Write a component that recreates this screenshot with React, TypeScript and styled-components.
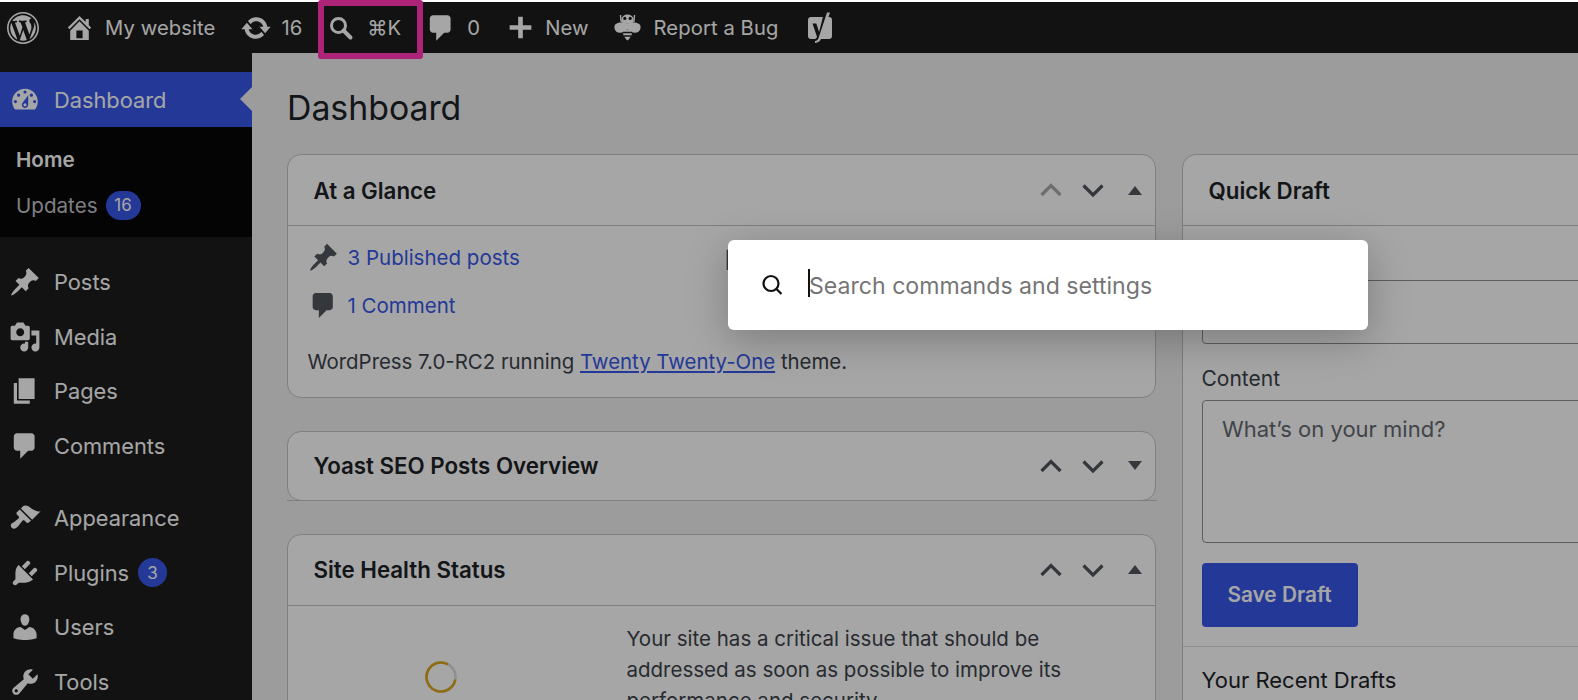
import styled, { createGlobalStyle } from 'styled-components';

const GlobalStyle = createGlobalStyle`
  html, body {
    margin: 0;
    padding: 0;
    height: 700px;
    overflow: hidden;
    background: #fff;
    font-family: Inter, "Liberation Sans", sans-serif;
  }
  * {
    box-sizing: border-box;
  }
`;

const paths = {
  wordpress:
    'M20 10c0-5.52-4.48-10-10-10S0 4.48 0 10s4.48 10 10 10 10-4.48 10-10zM10 1.01c4.97 0 8.99 4.02 8.99 8.99s-4.02 8.99-8.99 8.99S1.01 14.97 1.01 10 5.03 1.01 10 1.01zM8.01 14.82L4.96 6.61c.49-.03 1.05-.08 1.05-.08.43-.05.38-1.01-.06-.99 0 0-1.29.1-2.13.1-.15 0-.33 0-.52-.01 1.44-2.17 3.9-3.6 6.7-3.6 2.09 0 3.99.79 5.41 2.09-.6-.08-1.45.35-1.45 1.42 0 .66.38 1.22.79 1.88.31.54.5 1.22.5 2.21 0 1.34-1.27 4.48-1.27 4.48l-2.71-7.5c.48-.03.75-.16.75-.16.43-.05.38-1.1-.05-1.08 0 0-1.3.11-2.14.11-.78 0-2.11-.11-2.11-.11-.43-.02-.48 1.06-.05 1.08l.84.08 1.12 3.04zm6.02 2.15L16.64 10s.67-1.69.39-3.81c.63 1.14.94 2.42.94 3.81 0 2.96-1.56 5.58-3.94 6.97zM2.68 6.77L6.5 17.25c-2.67-1.3-4.47-4.07-4.47-7.25 0-1.16.2-2.23.65-3.23zm7.45 4.53l2.29 6.25c-.75.27-1.57.42-2.42.42-.72 0-1.41-.11-2.06-.3z',
  home: 'M16 8.5l1.53 1.53-1.06 1.06L10 4.62l-6.47 6.47-1.06-1.06L10 2.5l4 4v-2h2v4zm-6-2.46l6 5.99V18H4v-5.97zM12 17v-5H8v5h4z',
  update:
    'M10.2 3.28c3.53 0 6.43 2.61 6.92 6h2.08l-3.5 4-3.5-4h2.32c-.45-1.97-2.21-3.45-4.32-3.45-1.45 0-2.73.71-3.54 1.78L4.95 5.66C6.23 4.2 8.11 3.28 10.2 3.28zm-.4 13.44c-3.52 0-6.43-2.61-6.92-6H.8l3.5-4c1.17 1.33 2.33 2.67 3.5 4H5.48c.45 1.97 2.21 3.45 4.32 3.45 1.45 0 2.73-.71 3.54-1.78l1.71 1.95c-1.28 1.46-3.15 2.38-5.25 2.38z',
  comment:
    'M5 2h9c1.1 0 2 .9 2 2v7c0 1.1-.9 2-2 2h-2l-5 5v-5H5c-1.1 0-2-.9-2-2V4c0-1.1.9-2 2-2z',
  plus: 'M17 8.5v3h-5.5V17h-3v-5.5H3v-3h5.5V3h3v5.5z',
  dashboard:
    'M3.76 16h12.48c1.1-1.37 1.76-3.11 1.76-5 0-4.42-3.58-8-8-8s-8 3.58-8 8c0 1.89.66 3.63 1.76 5zM10 4c.55 0 1 .45 1 1s-.45 1-1 1-1-.45-1-1 .45-1 1-1zM6 6c.55 0 1 .45 1 1s-.45 1-1 1-1-.45-1-1 .45-1 1-1zm8 0c.55 0 1 .45 1 1s-.45 1-1 1-1-.45-1-1 .45-1 1-1zm-5.37 5.55L12 7v6c0 1.1-.9 2-2 2s-2-.9-2-2c0-.57.24-1.08.63-1.45zM4 10c.55 0 1 .45 1 1s-.45 1-1 1-1-.45-1-1 .45-1 1-1zm12 0c.55 0 1 .45 1 1s-.45 1-1 1-1-.45-1-1 .45-1 1-1zm-5 3c0-.55-.45-1-1-1s-1 .45-1 1 .45 1 1 1 1-.45 1-1z',
  pin: 'M10.44 3.02l1.82-1.82 6.36 6.35-1.83 1.82c-1.05-.68-2.48-.57-3.41.36l-.75.75c-.92.93-1.04 2.35-.35 3.41l-1.83 1.82-2.41-2.41-2.8 2.79c-.42.42-3.38 2.71-3.8 2.29s1.86-3.39 2.28-3.81l2.79-2.79L4.1 9.36l1.83-1.82c1.05.69 2.48.57 3.4-.36l.75-.75c.93-.92 1.05-2.35.36-3.41z',
  media:
    'M13 11V4c0-.55-.45-1-1-1h-1.67L9 1H5L3.67 3H2c-.55 0-1 .45-1 1v7c0 .55.45 1 1 1h10c.55 0 1-.45 1-1zM7 4.5c1.38 0 2.5 1.12 2.5 2.5S8.38 9.5 7 9.5 4.5 8.38 4.5 7 5.62 4.5 7 4.5zM14 6h5v10.5c0 1.38-1.12 2.5-2.5 2.5S14 17.88 14 16.5s1.12-2.5 2.5-2.5c.17 0 .34.02.5.05V9h-3V6zm-4 8.05V13h2v3.5c0 1.38-1.12 2.5-2.5 2.5S7 17.88 7 16.5 8.12 14 9.5 14c.17 0 .34.02.5.05z',
  page: 'M6 15V2h10v13H6zm-1 1h8v2H3V5h2v11z',
  appearance:
    'M14.48 11.06L7.41 3.99l1.5-1.5c.5-.56 2.3-.47 3.51.32 1.21.8 1.43 1.28 2.91 2.1 1.18.64 2.45 1.26 4.45.85zm-.71.71L6.7 4.7 4.93 6.47c-.39.39-.39 1.02 0 1.41l1.06 1.06c.39.39.39 1.03 0 1.42-.6.6-1.43 1.11-2.21 1.69-.35.26-.7.53-1.01.84C1.43 13.23.4 14.76 1.7 16.06c1.3 1.3 2.83.27 4.17-1.07.31-.31.58-.66.84-1.01.58-.78 1.09-1.61 1.69-2.21.39-.39 1.03-.39 1.42 0l1.06 1.06c.39.39 1.02.39 1.41 0z',
  plugins:
    'M13.11 4.36L9.87 7.6 8 5.73l3.24-3.24c.35-.34 1.05-.2 1.56.32.52.51.66 1.21.31 1.55zm-8 1.77l.91-1.12 9.01 9.01-1.19.84c-.71.71-2.63 1.16-3.82 1.16H6.14L4.9 17.26c-.59.59-1.54.59-2.12 0-.59-.58-.59-1.53 0-2.12l1.24-1.24v-3.88c0-1.13.4-3.19 1.09-3.89zm7.26 3.97l3.24-3.24c.34-.35 1.04-.21 1.55.31.52.51.66 1.21.31 1.55l-3.24 3.25z',
  users:
    'M10 9.25c-2.27 0-2.73-3.44-2.73-3.44C7 4.02 7.82 2 9.97 2c2.16 0 2.98 2.02 2.71 3.81 0 0-.41 3.44-2.68 3.44zm0 2.57L12.72 10c2.39 0 4.52 2.33 4.52 4.53v2.49s-3.65 1.13-7.24 1.13c-3.65 0-7.24-1.13-7.24-1.13v-2.49c0-2.25 1.94-4.48 4.47-4.48z',
  tools:
    'M16.68 9.77c-1.34 1.34-3.3 1.67-4.95.99l-5.41 6.52c-.99.99-2.59.99-3.58 0s-.99-2.59 0-3.57l6.52-5.42c-.68-1.65-.35-3.61.99-4.95 1.28-1.28 3.12-1.62 4.72-1.06l-2.89 2.89 2.82 2.82 2.86-2.87c.53 1.58.18 3.39-1.08 4.65zM3.81 16.21c.4.39 1.04.39 1.43 0 .4-.4.4-1.04 0-1.43-.39-.4-1.03-.4-1.43 0-.39.39-.39 1.03 0 1.43z',
};

function Dash({ name, size }: { name: keyof typeof paths; size: number }) {
  return (
    <svg width={size} height={size} viewBox="0 0 20 20" fill="currentColor" style={{ flex: 'none' }}>
      <path d={paths[name]} />
    </svg>
  );
}

function SearchGlyph() {
  return (
    <svg width="26" height="26" viewBox="0 0 26 26" fill="none" stroke="currentColor" style={{ flex: 'none' }}>
      <circle cx="10.5" cy="10.5" r="7" strokeWidth="3" />
      <path d="M15.5 15.5l7 7" strokeWidth="4" strokeLinecap="round" />
    </svg>
  );
}

function BeeGlyph() {
  return (
    <svg width="27" height="27" viewBox="0 0 27 27" fill="currentColor" style={{ flex: 'none' }}>
      <path d="M6.5 1 7 7 10 9M20.5 1 20 7l-3 2" stroke="currentColor" strokeWidth="1.4" fill="none" />
      <ellipse cx="13.5" cy="5.2" rx="6" ry="4.6" />
      <circle cx="10.8" cy="4.4" r="1.6" fill="#1c1c1c" />
      <circle cx="16.2" cy="4.4" r="1.6" fill="#1c1c1c" />
      <path d="M13.5 9.5C9.5 8 3.5 7.8 1.2 10.6-.8 13.6 1.2 18.5 5.5 18.8c3 .2 5.8-1.3 8-3.8 2.2 2.5 5 4 8 3.8 4.3-.3 6.3-5.2 4.3-8.2-2.3-2.8-8.3-2.6-12.3-1.100z" />
      <path d="M8.5 15.5c0 4.5 2.2 9 5 11 2.8-2 5-6.5 5-11z" />
      <path d="M8.8 17.8h9.4v1.5H8.8zM9.900 21.300h7.200v1.500H9.900z" fill="#1c1c1c" />
    </svg>
  );
}

function YoastGlyph() {
  return (
    <svg width="28" height="32" viewBox="0 0 28 32" style={{ flex: 'none' }}>
      <path
        d="M5 5h18c1.8 0 3 1.200 3 3v16c0 2-1.200 3-3 3H5c-2 0-3-1.200-3-3V8c0-1.800 1.200-3 3-3z"
        fill="currentColor"
      />
      <path
        d="M21.500 1.500 13 26c-.8 2.200-2.500 3.600-5 4.200V27.500c1.600-.5 2.600-1.300 3-2.800L6.500 11.500h3.800l2.800 8.600L17.800 1.500z"
        fill="#1c1c1c"
      />
      <path d="M21 .5h3L15 27c-.8 2.200-3 3.800-6 4v-2c2-.3 3-1.300 3.500-2.800z" fill="currentColor" />
    </svg>
  );
}

function Chevron({ dir, faded }: { dir: 'up' | 'down'; faded?: boolean }) {
  return (
    <svg
      width="26"
      height="26"
      viewBox="0 0 26 26"
      fill="none"
      stroke={faded ? '#a7aaad' : '#50575e'}
      strokeWidth="3.2"
      style={{ flex: 'none' }}
    >
      <path d={dir === 'up' ? 'M3.5 18 13 8.500 22.500 18' : 'M3.500 8.500 13 18l9.500-9.500'} />
    </svg>
  );
}

function HealthRing() {
  return (
    <svg width="32" height="32" viewBox="0 0 32 32" fill="none" strokeWidth="2.6" style={{ flex: 'none' }}>
      <circle cx="16" cy="16" r="14.5" stroke="#dcdcde" />
      <path d="M23 3.300A14.500 14.500 0 1 0 30.300 18.500" stroke="#dba617" />
    </svg>
  );
}

const barItems = [
  { icon: <Dash name="home" size={31} />, label: 'My website', gap: 10, left: 25 },
  { icon: <Dash name="update" size={32} />, label: '16', gap: 9, left: 25 },
  { icon: <SearchGlyph />, label: '⌘K', gap: 13, left: 26 },
  { icon: <Dash name="comment" size={32} />, label: '0', gap: 10, left: 24 },
  { icon: <Dash name="plus" size={31} />, label: 'New', gap: 9, left: 25 },
  { icon: <BeeGlyph />, label: 'Report a Bug', gap: 13, left: 25 },
];

const menuGroups = [
  [
    { icon: 'pin', label: 'Posts' },
    { icon: 'media', label: 'Media' },
    { icon: 'page', label: 'Pages' },
    { icon: 'comment', label: 'Comments' },
  ],
  [
    { icon: 'appearance', label: 'Appearance' },
    { icon: 'plugins', label: 'Plugins', badge: '3' },
    { icon: 'users', label: 'Users' },
    { icon: 'tools', label: 'Tools' },
  ],
] as { icon: keyof typeof paths; label: string; badge?: string }[][];

function App() {
  return (
    <Page>
      <GlobalStyle />
      <AdminBar>
        <Dash name="wordpress" size={32} />
        {barItems.map((item) => (
          <BarItem key={item.label} $gap={item.gap} $left={item.left}>
            {item.icon}
            {item.label}
          </BarItem>
        ))}
        <BarItem $gap={0} $left={28}>
          <YoastGlyph />
        </BarItem>
      </AdminBar>

      <Body>
        <Sidebar>
          <CurrentItem>
            <Dash name="dashboard" size={32} />
            Dashboard
          </CurrentItem>
          <SubMenu>
            <SubItem $active>Home</SubItem>
            <SubItem>
              Updates <Count $wide>16</Count>
            </SubItem>
          </SubMenu>
          {menuGroups.map((group, i) => (
            <MenuGroup key={i}>
              {group.map((item) => (
                <MenuItem key={item.label}>
                  <Dash name={item.icon} size={32} />
                  {item.label}
                  {item.badge && <Count>{item.badge}</Count>}
                </MenuItem>
              ))}
            </MenuGroup>
          ))}
        </Sidebar>

        <Main>
          <Title>Dashboard</Title>
          <Columns>
            <LeftColumn>
              <Card>
                <CardHead>
                  At a Glance
                  <CardControls>
                    <Chevron dir="up" faded />
                    <Chevron dir="down" />
                    <Caret />
                  </CardControls>
                </CardHead>
                <GlanceBody>
                  <GlanceGrid>
                    <GlanceRow>
                      <Dash name="pin" size={31} />
                      <BlueLink>3 Published posts</BlueLink>
                    </GlanceRow>
                    <GlanceRow>
                      <Dash name="page" size={31} />
                      <BlueLink>1 Page</BlueLink>
                    </GlanceRow>
                    <GlanceRow>
                      <Dash name="comment" size={31} />
                      <BlueLink>1 Comment</BlueLink>
                    </GlanceRow>
                  </GlanceGrid>
                  <Running>
                    WordPress 7.0-RC2 running <ThemeLink>Twenty Twenty-One</ThemeLink> theme.
                  </Running>
                </GlanceBody>
              </Card>

              <Card $flatBottom>
                <CardHead $closed>
                  Yoast SEO Posts Overview
                  <CardControls>
                    <Chevron dir="up" />
                    <Chevron dir="down" />
                    <Caret $down />
                  </CardControls>
                </CardHead>
              </Card>

              <Card>
                <CardHead>
                  Site Health Status
                  <CardControls>
                    <Chevron dir="up" />
                    <Chevron dir="down" />
                    <Caret />
                  </CardControls>
                </CardHead>
                <HealthBody>
                  <RingSlot>
                    <HealthRing />
                  </RingSlot>
                  <HealthText>
                    Your site has a critical issue that should be addressed as soon as possible to
                    improve its performance and security.
                  </HealthText>
                </HealthBody>
              </Card>
            </LeftColumn>

            <RightColumn>
              <Card>
                <CardHead>Quick Draft</CardHead>
                <DraftBody>
                  <FieldLabel>Title</FieldLabel>
                  <TitleInput />
                  <FieldLabel>Content</FieldLabel>
                  <ContentInput>What’s on your mind?</ContentInput>
                  <SaveButton>Save Draft</SaveButton>
                </DraftBody>
                <RecentDrafts>Your Recent Drafts</RecentDrafts>
              </Card>
            </RightColumn>
          </Columns>
        </Main>
      </Body>

      <Backdrop />
      <Highlight />
      <Palette>
        <svg width="24" height="24" viewBox="0 0 24 24" fill="none" stroke="#111" strokeWidth="2.2" style={{ flex: 'none' }}>
          <circle cx="11" cy="10.500" r="7.500" />
          <path d="M16.500 16l5 5" />
        </svg>
        <PaletteInput>
          <Cursor />
          Search commands and settings
        </PaletteInput>
      </Palette>
    </Page>
  );
}

export default App;

const Page = styled.div`
  position: relative;
  height: 700px;
  padding-top: 2px;
  overflow: hidden;
`;

const AdminBar = styled.header`
  display: flex;
  align-items: center;
  height: 51px;
  padding-left: 7px;
  background: #1c1c1c;
  color: #fff;
  font-size: 20.2px;
  letter-spacing: 0.1px;
`;

const BarItem = styled.div<{ $gap: number; $left: number }>`
  display: flex;
  align-items: center;
  gap: ${(p) => p.$gap}px;
  margin-left: ${(p) => p.$left}px;
  white-space: nowrap;
`;

const Body = styled.div`
  display: flex;
  height: 647px;
`;

const Sidebar = styled.nav`
  flex: none;
  width: 252px;
  padding-top: 19px;
  background: #1c1c1c;
  color: #fff;
  font-size: 21.8px;
`;

const CurrentItem = styled.div`
  position: relative;
  display: flex;
  align-items: center;
  gap: 13px;
  height: 55px;
  padding-left: 9px;
  background: #3858e9;

  &::after {
    content: '';
    position: absolute;
    right: 0;
    top: 15px;
    border: 12px solid transparent;
    border-right-color: #f0f0f1;
    border-left-width: 0;
  }
`;

const SubMenu = styled.div`
  display: flex;
  flex-direction: column;
  gap: 16px;
  height: 110px;
  padding: 17px 16px 0;
  background: #070707;
  font-size: 20.6px;
`;

const SubItem = styled.div<{ $active?: boolean }>`
  display: flex;
  align-items: center;
  gap: 8px;
  height: 30px;
  font-weight: ${(p) => (p.$active ? 600 : 400)};
  color: ${(p) => (p.$active ? '#fff' : '#c3c4c7')};
`;

const Count = styled.span<{ $wide?: boolean }>`
  display: inline-flex;
  align-items: center;
  justify-content: center;
  flex: none;
  width: ${(p) => (p.$wide ? 35 : 29)}px;
  height: 29px;
  margin-left: ${(p) => (p.$wide ? 0 : -4)}px;
  border-radius: 15px;
  background: #3858e9;
  color: #fff;
  font-size: 17px;
  font-weight: 400;
`;

const MenuGroup = styled.div`
  display: flex;
  flex-direction: column;
  padding-top: 18px;
`;

const MenuItem = styled.div`
  display: flex;
  align-items: center;
  gap: 13px;
  height: 54.5px;
  padding-left: 9px;
`;

const Main = styled.main`
  flex: 1;
  min-width: 0;
  padding-left: 35px;
  background: #f0f0f1;
  color: #1d2327;
`;

const Title = styled.h1`
  margin: 0;
  padding-top: 32px;
  height: 101px;
  font-size: 33.8px;
  font-weight: 400;
  line-height: 46px;
`;

const Columns = styled.div`
  display: flex;
  gap: 26px;
`;

const LeftColumn = styled.div`
  display: flex;
  flex: none;
  flex-direction: column;
  gap: 33px;
  width: 869px;
`;

const RightColumn = styled.div`
  flex: none;
  width: 500px;
`;

const Card = styled.section<{ $flatBottom?: boolean }>`
  position: relative;
  border: 1.5px solid #c3c4c7;
  border-radius: 14px;
  background: #fff;

  ${(p) =>
    p.$flatBottom &&
    `
    &::after {
      content: '';
      position: absolute;
      left: -1.5px;
      right: -1.5px;
      bottom: -1.5px;
      height: 1.5px;
      background: #c3c4c7;
    }
  `}
`;

const CardHead = styled.div<{ $closed?: boolean }>`
  display: flex;
  align-items: center;
  justify-content: space-between;
  height: ${(p) => (p.$closed ? 67.5 : 71)}px;
  padding: 0 13px 0 25.5px;
  border-bottom: ${(p) => (p.$closed ? 'none' : '1.5px solid #c3c4c7')};
  font-size: 22.3px;
  font-weight: 600;
`;

const CardControls = styled.div`
  display: flex;
  align-items: center;
  gap: 16px;
`;

const Caret = styled.span<{ $down?: boolean }>`
  width: 0;
  height: 0;
  margin-left: 6px;
  border-left: 7px solid transparent;
  border-right: 7px solid transparent;
  border-bottom: ${(p) => (p.$down ? 'none' : '9.5px solid #50575e')};
  border-top: ${(p) => (p.$down ? '9.5px solid #50575e' : 'none')};
`;

const GlanceBody = styled.div`
  height: 171px;
  padding: 15px 19.5px 0;
  font-size: 20.5px;
`;

const GlanceGrid = styled.div`
  display: grid;
  grid-template-columns: 414px 1fr;
  row-gap: 16px;
`;

const GlanceRow = styled.div`
  display: flex;
  align-items: center;
  gap: 9px;
  height: 32px;
  color: #50575e;
`;

const BlueLink = styled.span`
  color: #3858e9;
`;

const Running = styled.p`
  margin: 28px 0 0;
  font-size: 20.4px;
  color: #3c434a;
`;

const ThemeLink = styled.span`
  color: #3858e9;
  text-decoration: underline;
`;

const HealthBody = styled.div`
  display: flex;
  height: 200px;
  padding: 17px 0 0 136.5px;
`;

const RingSlot = styled.div`
  flex: none;
  margin: 38px 170px 0 0;
`;

const HealthText = styled.p`
  width: 445px;
  margin: 0;
  font-size: 20.5px;
  line-height: 31px;
  color: #3c434a;
`;

const DraftBody = styled.div`
  padding: 19px 18.5px 19px;
  border-bottom: 1.5px solid #dcdcde;
  font-size: 21px;
  color: #3c434a;
`;

const FieldLabel = styled.div`
  height: 30px;
  line-height: 30px;
`;

const TitleInput = styled.div`
  height: 64.5px;
  margin: 4.5px 0 19.5px;
  border: 1.5px solid #8c8f94;
  border-radius: 4px;
`;

const ContentInput = styled.div`
  height: 143px;
  margin: 6px 0 20px;
  padding: 13px 19.5px;
  border: 1.5px solid #8c8f94;
  border-radius: 4px;
  font-size: 22px;
  line-height: 30px;
  color: #646970;
`;

const SaveButton = styled.button`
  display: block;
  width: 156px;
  height: 64px;
  padding: 0;
  border: none;
  border-radius: 4px;
  background: #3858e9;
  color: #fff;
  font: 600 20.8px Inter, "Liberation Sans", sans-serif;
`;

const RecentDrafts = styled.div`
  padding: 20px 18.5px;
  font-size: 22px;
  line-height: 26px;
  color: #1d2327;
`;

const Backdrop = styled.div`
  position: absolute;
  inset: 2px 0 0;
  background: rgba(0, 0, 0, 0.35);
`;

const Highlight = styled.div`
  position: absolute;
  left: 318px;
  top: 0;
  width: 105px;
  height: 59px;
  border: 6px solid #ac2378;
  border-radius: 3px;
`;

const Palette = styled.div`
  position: absolute;
  left: 728px;
  top: 240px;
  display: flex;
  align-items: center;
  gap: 25px;
  width: 640px;
  height: 90px;
  padding-left: 32px;
  border-radius: 6px;
  background: #fff;
  box-shadow: 0 10px 40px rgba(0, 0, 0, 0.25);
`;

const PaletteInput = styled.div`
  position: relative;
  padding-top: 2px;
  font-size: 23.1px;
  color: #757575;
`;

const Cursor = styled.span`
  position: absolute;
  left: -1px;
  top: -1px;
  width: 2px;
  height: 28px;
  background: #111;
`;
